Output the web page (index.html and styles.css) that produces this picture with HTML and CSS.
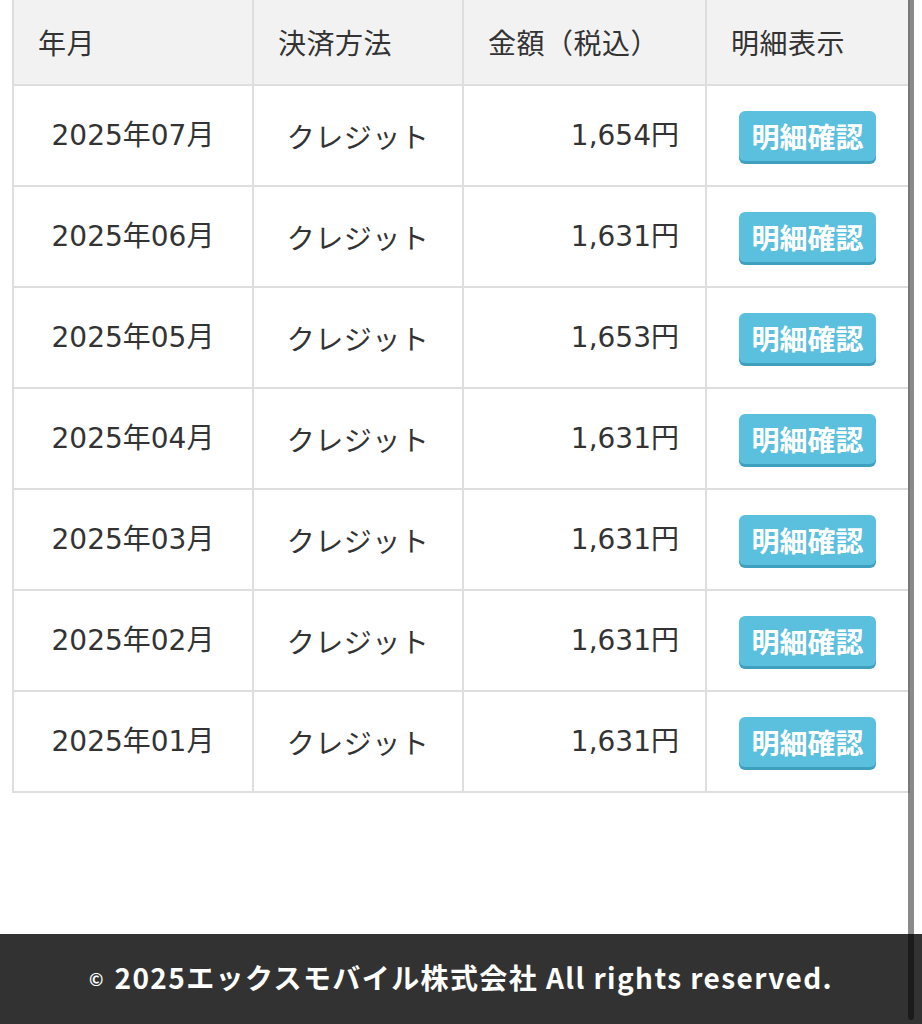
FILE: index.html
```html
<!DOCTYPE html>
<html lang="ja">
<head>
<meta charset="utf-8">
<title>ご利用明細</title>
<link rel="stylesheet" href="styles.css">
</head>
<body>
<main class="page">
  <div class="table-wrap">
    <table class="billing">
      <colgroup>
        <col class="w-month">
        <col class="w-method">
        <col class="w-amount">
        <col class="w-detail">
      </colgroup>
      <thead>
        <tr>
          <th>年月</th>
          <th>決済方法</th>
          <th>金額（税込）</th>
          <th>明細表示</th>
        </tr>
      </thead>
      <tbody>
        <tr><td class="c-month">2025年07月</td><td class="c-method">クレジット</td><td class="c-amount">1,654円</td><td class="c-detail"><a class="btn" href="#">明細確認</a></td></tr>
        <tr><td class="c-month">2025年06月</td><td class="c-method">クレジット</td><td class="c-amount">1,631円</td><td class="c-detail"><a class="btn" href="#">明細確認</a></td></tr>
        <tr><td class="c-month">2025年05月</td><td class="c-method">クレジット</td><td class="c-amount">1,653円</td><td class="c-detail"><a class="btn" href="#">明細確認</a></td></tr>
        <tr><td class="c-month">2025年04月</td><td class="c-method">クレジット</td><td class="c-amount">1,631円</td><td class="c-detail"><a class="btn" href="#">明細確認</a></td></tr>
        <tr><td class="c-month">2025年03月</td><td class="c-method">クレジット</td><td class="c-amount">1,631円</td><td class="c-detail"><a class="btn" href="#">明細確認</a></td></tr>
        <tr><td class="c-month">2025年02月</td><td class="c-method">クレジット</td><td class="c-amount">1,631円</td><td class="c-detail"><a class="btn" href="#">明細確認</a></td></tr>
        <tr><td class="c-month">2025年01月</td><td class="c-method">クレジット</td><td class="c-amount">1,631円</td><td class="c-detail"><a class="btn" href="#">明細確認</a></td></tr>
      </tbody>
    </table>
  </div>
  <footer class="footer">
    <p class="copy"><span class="copy-mark">©</span> 2025エックスモバイル株式会社 All rights reserved.</p>
  </footer>
</main>
<div class="scroll-indicator" aria-hidden="true"></div>
</body>
</html>
```

FILE: styles.css
```css
html, body {
  margin: 0;
  padding: 0;
  background: #ffffff;
}

body {
  font-family: "Noto Sans CJK JP", "Noto Sans", sans-serif;
  color: #333333;
  overflow: hidden;
  height: 1024px;
  position: relative;
}

.page {
  display: flex;
  flex-direction: column;
  min-height: 1024px;
}

.table-wrap {
  padding-left: 12px;
  padding-right: 14px;
}

.billing {
  width: 896px;
  border-collapse: collapse;
  table-layout: fixed;
  font-size: 28px;
}

.w-month { width: 240px; }
.w-method { width: 210px; }
.w-amount { width: 243px; }
.w-detail { width: 203px; }

.billing th,
.billing td {
  border: 2px solid #dedede;
  padding: 0 24px;
  line-height: 40px;
  font-weight: 400;
  white-space: nowrap;
}

.billing th {
  background: #f2f2f2;
  text-align: left;
  height: 84px;
  border-top: 0;
  vertical-align: middle;
  letter-spacing: 0.5px;
}

.billing td {
  height: 99px;
  vertical-align: middle;
  background: #ffffff;
  font-family: "DejaVu Sans", "Noto Sans CJK JP", sans-serif;
}

td.c-month,
td.c-method,
td.c-detail {
  text-align: center;
}

td.c-method {
  font-family: "Noto Sans CJK JP", sans-serif;
  letter-spacing: 0.5px;
}

td.c-amount {
  text-align: right;
  padding-right: 26px;
}

td.c-detail {
  padding: 0;
}

.btn {
  display: inline-block;
  background: #5bc0de;
  color: #ffffff;
  font-family: "Noto Sans CJK JP", sans-serif;
  font-weight: 700;
  text-decoration: none;
  padding: 6px 12px 5px;
  line-height: 39px;
  border-radius: 6px;
  box-shadow: 0 3px 0 #3f9fbf;
  vertical-align: middle;
}

.footer {
  margin-top: auto;
  background: #323232;
  height: 90px;
  display: flex;
  align-items: center;
  justify-content: center;
}

.copy {
  margin: 0;
  color: #ffffff;
  font-size: 28px;
  font-weight: 700;
  letter-spacing: 1.4px;
  line-height: 40px;
  padding-bottom: 2px;
}

.copy-mark {
  font-size: 17px;
  vertical-align: 3px;
  margin-right: 2px;
}

.scroll-indicator {
  position: absolute;
  left: 908px;
  top: -12px;
  bottom: 4px;
  width: 6px;
  border-radius: 3px;
  background: rgba(0, 0, 0, 0.46);
}
```
